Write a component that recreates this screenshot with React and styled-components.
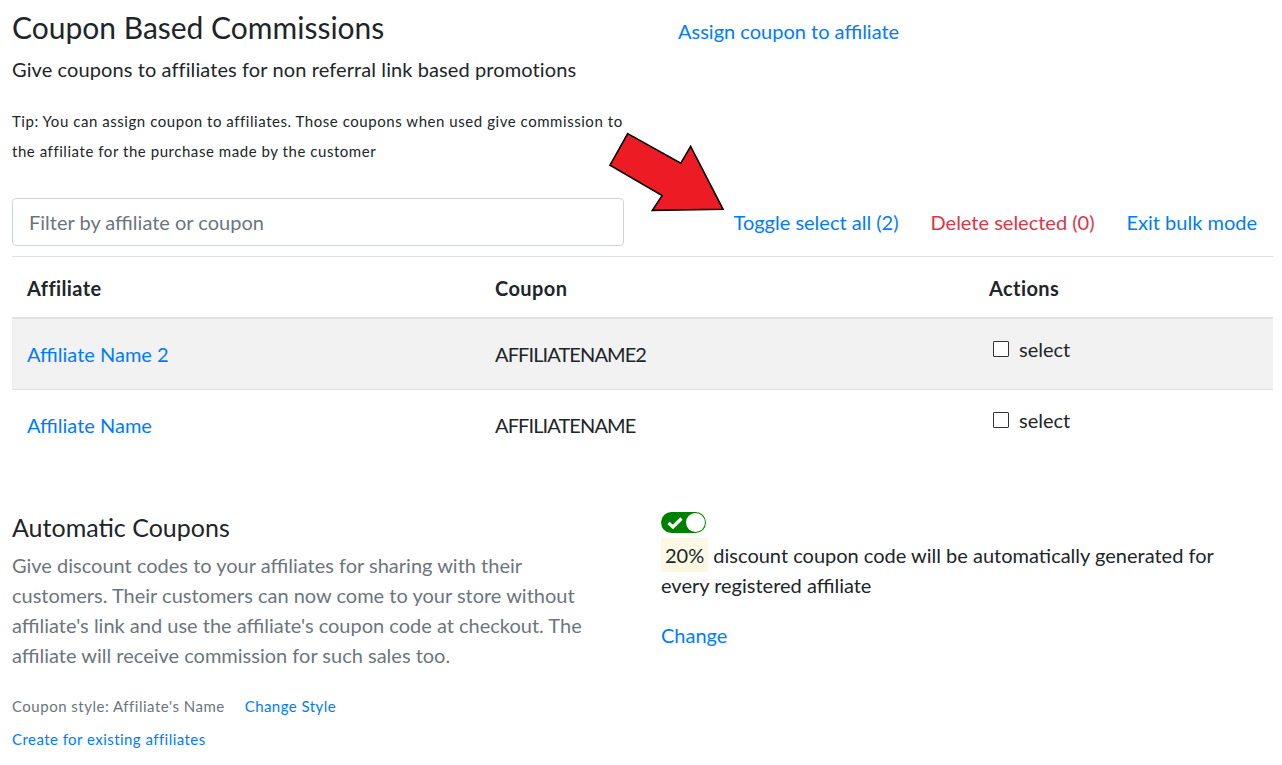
import styled, { createGlobalStyle } from "styled-components"

const GlobalStyle = createGlobalStyle`
  body {
    margin: 0;
    background: #fff;
    color: #212529;
    font-family: "Lato", "Open Sans", sans-serif;
  }
  * { box-sizing: border-box; }
`

const rows = [
  { name: "Affiliate Name 2", code: "AFFILIATENAME2" },
  { name: "Affiliate Name", code: "AFFILIATENAME" },
]

const App = () => {
  return (
    <Page>
      <GlobalStyle />
      <TopRow>
        <div>
          <Title>Coupon Based Commissions</Title>
          <Subtitle>Give coupons to affiliates for non referral link based promotions</Subtitle>
          <Tip>
            Tip: You can assign coupon to affiliates. Those coupons when used give commission to
            the affiliate for the purchase made by the customer
          </Tip>
        </div>
        <div>
          <AssignLink>Assign coupon to affiliate</AssignLink>
        </div>
      </TopRow>

      <Toolbar>
        <FilterInput type="text" placeholder="Filter by affiliate or coupon" />
        <BulkActions>
          <BulkLink>Toggle select all (2)</BulkLink>
          <BulkLink danger>Delete selected (0)</BulkLink>
          <BulkLink>Exit bulk mode</BulkLink>
        </BulkActions>
        <Arrow viewBox="0 0 120 82">
          <polygon
            points="18,3 72,33 82,16 115,80 43,81 53,66 0,35"
            fill="#ed1c24"
            stroke="#000"
            strokeWidth="1.6"
            strokeLinejoin="miter"
          />
        </Arrow>
      </Toolbar>

      <Table>
        <thead>
          <tr>
            <Th width="468">Affiliate</Th>
            <Th width="494">Coupon</Th>
            <Th>Actions</Th>
          </tr>
        </thead>
        <tbody>
          {rows.map((r, i) => (
            <Tr key={r.code} striped={i % 2 === 0}>
              <Td>
                <Link>{r.name}</Link>
              </Td>
              <Td code>{r.code}</Td>
              <Td>
                <Select>
                  <Check />
                  select
                </Select>
              </Td>
            </Tr>
          ))}
        </tbody>
      </Table>

      <AutoRow>
        <div>
          <SectionTitle>Automatic Coupons</SectionTitle>
          <Muted>
            Give discount codes to your affiliates for sharing with their customers. Their
            customers can now come to your store without affiliate's link and use the
            affiliate's coupon code at checkout. The affiliate will receive commission for such
            sales too.
          </Muted>
          <StyleLine>
            <SmallMuted>Coupon style: Affiliate's Name</SmallMuted>
            <SmallLink>Change Style</SmallLink>
          </StyleLine>
          <CreateLink>Create for existing affiliates</CreateLink>
        </div>
        <div>
          <Toggle>
            <svg width="16" height="12" viewBox="0 0 16 12">
              <path d="M1.5 6 L6 10 L14.5 1.5" fill="none" stroke="#fff" strokeWidth="3.2" />
            </svg>
            <Knob />
          </Toggle>
          <AutoText>
            <Mark>20%</Mark> discount coupon code will be automatically generated for every
            registered affiliate
          </AutoText>
          <ChangeLink>Change</ChangeLink>
        </div>
      </AutoRow>
    </Page>
  )
}

const Page = styled.div`
  padding: 10px 9px 20px 12px;
`

const TopRow = styled.div`
  display: grid;
  grid-template-columns: 612px 1fr;
  column-gap: 38px;
`

const Title = styled.h3`
  margin: 0;
  font-size: 30px;
  font-weight: 400;
  line-height: 34px;
`

const Subtitle = styled.div`
  margin-top: 10px;
  font-size: 20px;
  line-height: 30px;
  letter-spacing: 0.1px;
`

const Tip = styled.p`
  margin: 22px 0 0;
  font-size: 15px;
  line-height: 30px;
  letter-spacing: 0.55px;
  width: 618px;
`

const Link = styled.a`
  color: #007bff;
  cursor: pointer;
  text-decoration: none;
`

const AssignLink = styled(Link)`
  display: inline-block;
  margin: 6px 0 0 16px;
  font-size: 20px;
  line-height: 30px;
`

const Toolbar = styled.div`
  position: relative;
  display: flex;
  align-items: center;
  justify-content: space-between;
  margin-top: 32px;
`

const FilterInput = styled.input`
  width: 612px;
  height: 48px;
  padding: 0 16px;
  border: 1px solid #ced4da;
  border-radius: 4px;
  font-family: inherit;
  font-size: 20px;
  color: #495057;
  outline: none;
  &::placeholder {
    color: #6c757d;
  }
`

const BulkActions = styled.div`
  display: flex;
  align-items: center;
`

const BulkLink = styled(Link)`
  padding: 0 16px;
  font-size: 20px;
  line-height: 30px;
  color: ${(p) => (p.danger ? "#dc3545" : "#007bff")};
`

const Arrow = styled.svg`
  position: absolute;
  left: 598px;
  top: -68px;
  width: 118px;
  height: 82px;
  overflow: visible;
`

const Table = styled.table`
  width: 100%;
  margin-top: 10px;
  border-collapse: collapse;
  font-size: 20px;
`

const Th = styled.th`
  width: ${(p) => (p.width ? p.width + "px" : "auto")};
  padding: 17px 15px 15px;
  text-align: left;
  font-weight: 700;
  line-height: 28px;
  letter-spacing: 0.4px;
  border-top: 1px solid #dee2e6;
  border-bottom: 2px solid #dee2e6;
`

const Tr = styled.tr`
  background: ${(p) => (p.striped ? "#f2f2f2" : "transparent")};
`

const Td = styled.td`
  padding: 21px 15px;
  line-height: 28px;
  vertical-align: top;
  letter-spacing: ${(p) => (p.code ? "-0.9px" : "0")};
  border-bottom: 1px solid #dee2e6;
  tr:last-child & {
    border-bottom: none;
  }
`

const Select = styled.label`
  display: flex;
  align-items: center;
  gap: 10px;
  margin-top: -5px;
`

const Check = styled.span`
  width: 16px;
  height: 16px;
  margin-left: 4px;
  border: 1px solid #333;
  border-radius: 1px;
  background: #fff;
`

const AutoRow = styled.div`
  display: grid;
  grid-template-columns: 612px 600px;
  column-gap: 37px;
  margin-top: 42px;
`

const SectionTitle = styled.h4`
  margin: 0;
  padding-top: 10px;
  font-size: 25px;
  font-weight: 400;
  line-height: 30px;
`

const Muted = styled.p`
  width: 600px;
  margin: 8px 0 0;
  font-size: 20px;
  line-height: 30px;
  color: #6c757d;
`

const StyleLine = styled.div`
  display: flex;
  align-items: baseline;
  gap: 20px;
  margin-top: 19px;
`

const SmallMuted = styled.span`
  font-size: 15px;
  line-height: 30px;
  letter-spacing: 0.5px;
  color: #6c757d;
`

const SmallLink = styled(Link)`
  display: inline-block;
  font-size: 15px;
  line-height: 30px;
  letter-spacing: 0.45px;
  margin-top: 2px;
`

const CreateLink = styled(SmallLink)`
  margin-top: 3px;
`

const Toggle = styled.div`
  position: relative;
  display: flex;
  align-items: center;
  width: 45px;
  height: 21px;
  margin-top: 10px;
  padding-left: 6px;
  border-radius: 11px;
  background: #008000;
`

const Knob = styled.span`
  position: absolute;
  right: 1px;
  top: 1px;
  width: 19px;
  height: 19px;
  border-radius: 50%;
  background: #fff;
`

const AutoText = styled.p`
  margin: 7px 0 0;
  font-size: 20px;
  line-height: 30px;
`

const Mark = styled.mark`
  padding: 5px 4px;
  background: #fcf8e3;
  color: #212529;
`

const ChangeLink = styled(Link)`
  display: inline-block;
  margin-top: 20px;
  font-size: 20px;
  line-height: 30px;
`

export default App
